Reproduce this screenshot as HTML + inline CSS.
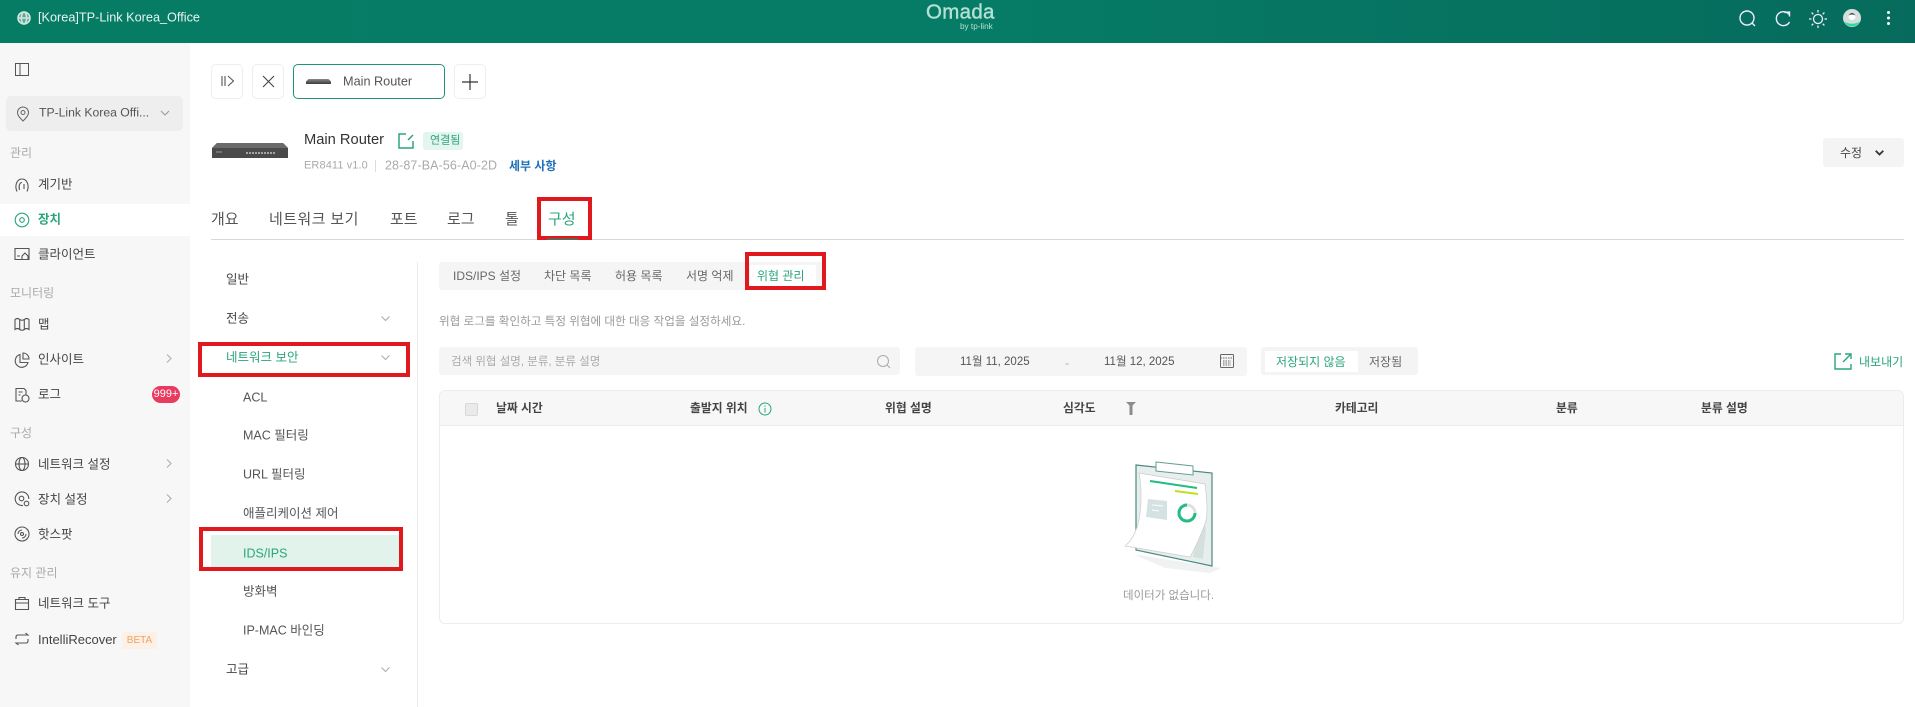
<!DOCTYPE html>
<html lang="ko"><head><meta charset="utf-8"><title>Omada</title>
<style>
*{box-sizing:border-box}
html,body{margin:0;padding:0;width:1915px;height:707px;overflow:hidden;background:#fff;font-family:"Liberation Sans","Noto Sans CJK KR",sans-serif;color:#444}
.a{position:absolute}
.t{position:absolute;transform:translateY(calc(-50% + 1px));white-space:nowrap;line-height:1.2;font-size:12px;color:#4a4a4a}
.s{font-size:12.5px;left:38px;color:#444}
.g{font-size:12px;left:10px;color:#aaa}
.m{font-size:12.5px;left:226px;color:#444}
.n{font-size:12.5px;left:243px;color:#555}
.tb{font-size:15px;top:219px;color:#555}
.st{font-size:12px;top:275px;color:#666}
.h{font-size:11.8px;top:407px;font-weight:bold;color:#444}
.green{color:#2aa57c!important}
.box{position:absolute;border:4px solid #e0191f}
.btn{position:absolute;top:64px;width:32px;height:35px;border:1px solid #eee;border-radius:5px;background:#fff}
svg{position:absolute;overflow:visible;fill:none}
</style></head><body>
<!-- header -->
<div class="a" style="left:0;top:0;width:1915px;height:43px;background:linear-gradient(90deg,#077c65,#067c66 50%,#066b5c)"></div>
<svg style="left:17px;top:11px" width="14" height="14" viewBox="0 0 14 14" stroke="#cfe6df" stroke-width="1.6"><circle cx="7" cy="7" r="6" fill="#5fa795"/><ellipse cx="7" cy="7" rx="2.6" ry="6"/><path d="M1 7h12"/></svg>
<div class="t" style="left:38px;top:17px;font-size:12.7px;color:#e8f4f0">[Korea]TP-Link Korea_Office</div>
<div class="t" style="left:926px;top:12px;font-size:20.5px;color:#b6e0d4;letter-spacing:.3px;-webkit-text-stroke:.4px #b6e0d4">Omada</div>
<div class="t" style="left:960px;top:26px;font-size:8.2px;color:#b6e0d4">by tp-link</div>
<svg style="left:1738px;top:9px" width="20" height="20" viewBox="0 0 20 20" stroke="#eef" stroke-width="1.4"><circle cx="9" cy="9" r="7"/><path d="M14 14l3 3"/></svg>
<svg style="left:1773px;top:9px" width="20" height="20" viewBox="0 0 20 20" stroke="#eef" stroke-width="1.4"><path d="M16 5.5A7 7 0 1 0 16.5 13"/><path d="M11.5 3.5L16.5 3v4.5"/></svg>
<svg style="left:1808px;top:9px" width="20" height="20" viewBox="0 0 20 20" stroke="#eef" stroke-width="1.3"><circle cx="10" cy="10" r="4.5"/><path d="M10 1v2.5M10 16.5V19M1 10h2.5M16.5 10H19M3.6 3.6l1.7 1.7M14.7 14.7l1.7 1.7M3.6 16.4l1.7-1.7M14.7 5.300l1.7-1.7"/></svg>
<svg style="left:1843px;top:9px" width="18" height="18" viewBox="0 0 18 18"><circle cx="9" cy="9" r="9" fill="#d5dfdd"/><path d="M1 12.500Q9 17 17 12.500A9 9 0 0 1 1 12.500Z" fill="#2ddc96"/><circle cx="9" cy="7.500" r="3.500" fill="#fff"/><path d="M5.500 6.500Q9 1.500 12.500 6.500Q9 4.500 5.500 6.500Z" fill="#35494a"/></svg>
<div class="a" style="left:1886.500px;top:11px;width:3px;height:3px;background:#fff;border-radius:2px;box-shadow:0 5.500px #fff,0 11px #fff"></div>
<!-- sidebar -->
<div class="a" style="left:0;top:43px;width:190px;height:664px;background:#f7f7f7"></div>
<svg style="left:15px;top:63px" width="14" height="13" viewBox="0 0 14 13" stroke="#555" stroke-width="1"><rect x=".5" y=".5" width="13" height="12"/><path d="M5 .5v12"/></svg>
<div class="a" style="left:6px;top:96px;width:177px;height:35px;background:#eee;border-radius:5px"></div>
<svg style="left:16px;top:106px" width="14" height="16" viewBox="0 0 14 16" stroke="#666" stroke-width="1"><path d="M7 15C3 11 1.500 9 1.500 6.500a5.500 5.500 0 0 1 11 0C12.500 9 11 11 7 15Z"/><circle cx="7" cy="6.500" r="2"/></svg>
<div class="t" style="left:39px;top:112px;font-size:12.2px;color:#555">TP-Link Korea Offi...</div>
<svg style="left:160px;top:110px" width="10" height="6" viewBox="0 0 10 6" stroke="#999"><path d="M1 1l4 4 4-4"/></svg>
<div class="t g" style="top:152px">관리</div>
<svg style="left:14px;top:178px" width="16" height="14" viewBox="0 0 16 14" stroke="#555" stroke-width="1.100"><path d="M3 13.500C.5 8 2.500 1 8 1s7.500 7 5 12.500M5.500 12C4.500 8 5.500 4.500 8 4.500M10 6v5"/></svg>
<div class="t s" style="top:184px">계기반</div>
<div class="a" style="left:0;top:204px;width:190px;height:32px;background:#fff"></div>
<svg style="left:14px;top:212px" width="16" height="16" viewBox="0 0 16 16" stroke="#2aa57c" stroke-width="1.100"><circle cx="8" cy="8" r="6.800"/><circle cx="8" cy="8" r="2.300"/></svg>
<div class="t s green" style="top:219px;font-weight:bold">장치</div>
<svg style="left:14px;top:247px" width="16" height="14" viewBox="0 0 16 14" stroke="#555" stroke-width="1.100"><path d="M1 1.500h14v11H1zM8 9l3-3 3 3v3.500H8zM3 9h3"/></svg>
<div class="t s" style="top:254px">클라이언트</div>
<div class="t g" style="top:292px">모니터링</div>
<svg style="left:14px;top:317px" width="16" height="14" viewBox="0 0 16 14" stroke="#555" stroke-width="1.100"><path d="M1 2.500q2.500-2 4.700 0v10q-2.200-2-4.700 0zM5.700 2.500q2.300 1.500 4.600 0v10q-2.300 1.500-4.600 0zM10.300 2.500q2.300-2 4.700 0v10q-2.400-2-4.700 0z"/></svg>
<div class="t s" style="top:324px">맵</div>
<svg style="left:14px;top:352px" width="16" height="16" viewBox="0 0 16 16" stroke="#555" stroke-width="1.100"><path d="M6 2.500a6.500 6.500 0 1 0 8 8H6zM9 1a6 6 0 0 1 6 6H9z"/></svg>
<div class="t s" style="top:359px">인사이트</div>
<svg style="left:166px;top:354px" width="6" height="9" viewBox="0 0 6 9" stroke="#aaa"><path d="M1 .5l4 4-4 4"/></svg>
<svg style="left:14px;top:387px" width="16" height="16" viewBox="0 0 16 16" stroke="#555" stroke-width="1.100"><path d="M8 14H2V1.500h8l2 2V8M4.500 5h4M4.500 8h2"/><circle cx="11.500" cy="11.500" r="3.500"/></svg>
<div class="t s" style="top:394px">로그</div>
<div class="a" style="left:152px;top:386px;width:28px;height:17px;background:#e93a5f;border-radius:9px;color:#fff;font-size:11px;line-height:17px;text-align:center">999+</div>
<div class="t g" style="top:432px">구성</div>
<svg style="left:14px;top:456px" width="16" height="16" viewBox="0 0 16 16" stroke="#555" stroke-width="1.100"><circle cx="8" cy="8" r="6.500"/><ellipse cx="8" cy="8" rx="3" ry="6.500"/><path d="M1.500 8h13"/></svg>
<div class="t s" style="top:464px">네트워크 설정</div>
<svg style="left:166px;top:459px" width="6" height="9" viewBox="0 0 6 9" stroke="#aaa"><path d="M1 .5l4 4-4 4"/></svg>
<svg style="left:14px;top:491px" width="16" height="16" viewBox="0 0 16 16" stroke="#555" stroke-width="1.100"><path d="M9 14.500A6.800 6.800 0 1 1 14.800 8"/><circle cx="7.500" cy="7.500" r="2.300"/><circle cx="12.500" cy="12.500" r="2.300"/></svg>
<div class="t s" style="top:499px">장치 설정</div>
<svg style="left:166px;top:494px" width="6" height="9" viewBox="0 0 6 9" stroke="#aaa"><path d="M1 .5l4 4-4 4"/></svg>
<svg style="left:14px;top:526px" width="16" height="16" viewBox="0 0 16 16" stroke="#555" stroke-width="1.100"><circle cx="8" cy="8" r="7"/><circle cx="8" cy="8" r="1.500"/><path d="M4 8a4 4 0 0 1 4-4M12 8a4 4 0 0 1-4 4"/></svg>
<div class="t s" style="top:534px">핫스팟</div>
<div class="t g" style="top:572px">유지 관리</div>
<svg style="left:14px;top:596px" width="16" height="15" viewBox="0 0 16 15" stroke="#555" stroke-width="1.100"><path d="M1.500 3.500h13v10h-13zM5 3.500V1.500h6v2M1.500 7h13"/></svg>
<div class="t s" style="top:603px">네트워크 도구</div>
<svg style="left:14px;top:632px" width="16" height="14" viewBox="0 0 16 14" stroke="#555" stroke-width="1.100"><path d="M2 7V5q0-2 2-2h10l-2.500-2M14 7v2q0 2-2 2H2l2.500 2"/></svg>
<div class="t s" style="top:639px;font-size:13px">IntelliRecover</div>
<div class="a" style="left:122px;top:632px;width:35px;height:17px;background:#fdf1e7;border-radius:2px;color:#f0a060;font-size:10px;line-height:18px;text-align:center">BETA</div>
<!-- device tabs row -->
<div class="btn" style="left:211px"></div>
<svg style="left:221px;top:75px" width="14" height="12" viewBox="0 0 14 12" stroke="#555" stroke-width="1.100"><path d="M1 1v10M4 1v10M7 1l5.500 5L7 11"/></svg>
<div class="btn" style="left:252px"></div>
<svg style="left:262px;top:75px" width="13" height="13" viewBox="0 0 13 13" stroke="#444" stroke-width="1.100"><path d="M1 1l11 11M12 1L1 12"/></svg>
<div class="a" style="left:293px;top:64px;width:152px;height:35px;border:1px solid #20937a;border-radius:5px"></div>
<div class="a" style="left:306px;top:79px;width:25px;height:5px;background:linear-gradient(#8a8a8a,#3a3a3a);clip-path:polygon(10% 0,90% 0,100% 50%,100% 100%,0 100%,0 50%)"></div>
<div class="t" style="left:343px;top:81px;font-size:12.7px;color:#555">Main Router</div>
<div class="btn" style="left:454px"></div>
<svg style="left:462px;top:74px" width="16" height="16" viewBox="0 0 16 16" stroke="#333" stroke-width="1.200"><path d="M8 0v16M0 8h16"/></svg>
<!-- device info -->
<svg style="left:212px;top:143px" width="76" height="15" viewBox="0 0 76 15"><path d="M5 0H71L76 5V15H0V5Z" fill="#4a4a4a"/><path d="M5 0H71L76 5H0Z" fill="#6a6a6a"/><path d="M34 10h30" stroke="#a5a5a5" stroke-width="2" stroke-dasharray="2 1"/><path d="M4 9h6" stroke="#999"/></svg>
<div class="t" style="left:304px;top:140px;font-size:14.7px;color:#333">Main Router</div>
<svg style="left:398px;top:133px" width="16" height="16" viewBox="0 0 16 16" stroke="#2aa57c" stroke-width="1.500"><path d="M8 1H1v14h14V8M10 7l5-5"/></svg>
<div class="a" style="left:423px;top:132px;width:40px;height:18px;background:#e4f4ee;border-radius:3px"></div>
<div class="t green" style="left:430px;top:140px;font-size:11px">연결됨</div>
<div class="t" style="left:304px;top:165px;font-size:11px;letter-spacing:.1px;color:#aaa">ER8411 v1.0</div>
<div class="a" style="left:375px;top:160px;width:1px;height:12px;background:#dcdcdc"></div>
<div class="t" style="left:385px;top:165px;font-size:12.500px;color:#aaa;letter-spacing:.1px">28-87-BA-56-A0-2D</div>
<div class="t" style="left:509px;top:165px;font-size:12px;color:#1e6fb8;font-weight:bold">세부 사항</div>
<div class="a" style="left:1823px;top:138px;width:81px;height:29px;background:#f4f4f4;border-radius:3px"></div>
<div class="t" style="left:1840px;top:152px;font-size:12px;color:#444">수정</div>
<svg style="left:1875px;top:150px" width="9" height="6" viewBox="0 0 9 6" stroke="#333" stroke-width="1.800"><path d="M.7.7l3.800 3.800L8.300.7"/></svg>
<!-- main tabs -->
<div class="t tb" style="left:211px">개요</div>
<div class="t tb" style="left:269px;letter-spacing:.4px">네트워크 보기</div>
<div class="t tb" style="left:390px">포트</div>
<div class="t tb" style="left:447px">로그</div>
<div class="t tb" style="left:505px">톨</div>
<div class="t tb green" style="left:548px">구성</div>
<div class="a" style="left:211px;top:239px;width:1693px;height:1px;background:#d8d8d8"></div>
<div class="box" style="left:537px;top:197px;width:55px;height:43px"></div>
<div class="a" style="left:547px;top:238px;width:31px;height:2px;background:#6b6050"></div>
<!-- left submenu -->
<div class="a" style="left:417px;top:262px;width:1px;height:445px;background:#ececec"></div>
<div class="t m" style="top:279px">일반</div>
<div class="t m" style="top:318px">전송</div>
<svg style="left:381px;top:316px" width="9" height="6" viewBox="0 0 9 6" stroke="#aaa"><path d="M.5.500l4 4 4-4"/></svg>
<div class="t m green" style="top:357px">네트워크 보안</div>
<svg style="left:381px;top:355px" width="9" height="6" viewBox="0 0 9 6" stroke="#aaa"><path d="M.5.500l4 4 4-4"/></svg>
<div class="box" style="left:198px;top:342px;width:212px;height:35px"></div>
<div class="t n" style="top:397px">ACL</div>
<div class="t n" style="top:435px">MAC 필터링</div>
<div class="t n" style="top:474px">URL 필터링</div>
<div class="t n" style="top:513px">애플리케이션 제어</div>
<div class="a" style="left:211px;top:535px;width:189px;height:33px;background:#e2f3ec"></div>
<div class="t n green" style="top:553px">IDS/IPS</div>
<div class="box" style="left:199px;top:527px;width:204px;height:44px"></div>
<div class="t n" style="top:591px">방화벽</div>
<div class="t n" style="top:630px">IP-MAC 바인딩</div>
<div class="t m" style="top:669px">고급</div>
<svg style="left:381px;top:667px" width="9" height="6" viewBox="0 0 9 6" stroke="#aaa"><path d="M.5.500l4 4 4-4"/></svg>
<!-- sub tabs -->
<div class="a" style="left:439px;top:262px;width:385px;height:28px;background:#f5f5f5;border-radius:3px"></div>
<div class="a" style="left:750px;top:265px;width:66px;height:22px;background:#fff"></div>
<div class="t st" style="left:453px">IDS/IPS 설정</div>
<div class="t st" style="left:544px">차단 목록</div>
<div class="t st" style="left:615px">허용 목록</div>
<div class="t st" style="left:686px">서명 억제</div>
<div class="t st green" style="left:757px">위협 관리</div>
<div class="box" style="left:745px;top:252px;width:81px;height:38px"></div>
<div class="t" style="left:439px;top:321px;font-size:11.600px;color:#999">위협 로그를 확인하고 특정 위협에 대한 대응 작업을 설정하세요.</div>
<!-- filters -->
<div class="a" style="left:439px;top:347px;width:461px;height:28px;background:#f5f5f5;border-radius:3px"></div>
<div class="t" style="left:451px;top:362px;font-size:11.500px;color:#aaa">검색 위협 설명, 분류, 분류 설명</div>
<svg style="left:877px;top:355px" width="14" height="14" viewBox="0 0 14 14" stroke="#aaa"><circle cx="6" cy="6" r="5.500"/><path d="M10 10l3 3"/></svg>
<div class="a" style="left:915px;top:347px;width:332px;height:29px;background:#f5f5f5;border-radius:3px"></div>
<div class="t" style="left:960px;top:362px;font-size:11.500px;color:#555">11월 11, 2025</div>
<div class="t" style="left:1065px;top:362px;font-size:12px;color:#aaa">-</div>
<div class="t" style="left:1104px;top:362px;font-size:11.500px;color:#555">11월 12, 2025</div>
<svg style="left:1220px;top:354px" width="14" height="14" viewBox="0 0 14 14" stroke="#666"><rect x=".5" y=".5" width="13" height="13" rx="1"/><path d="M.5 4h13M3 7h8M3 9h8M3 11h8" stroke-dasharray="1.500 1"/></svg>
<div class="a" style="left:1261px;top:347px;width:157px;height:28px;background:#f4f4f4;border-radius:3px"></div>
<div class="a" style="left:1265px;top:351px;width:93px;height:21px;background:#fff"></div>
<div class="t green" style="left:1276px;top:361px;font-size:12px">저장되지 않음</div>
<div class="t" style="left:1369px;top:361px;font-size:12px;color:#666">저장됨</div>
<svg style="left:1834px;top:353px" width="18" height="17" viewBox="0 0 18 17" stroke="#2aa57c" stroke-width="1.400"><path d="M7 1H1v15h16v-5M9 9l8-8M11 1h6v5"/></svg>
<div class="t green" style="left:1859px;top:361px;font-size:12px">내보내기</div>
<!-- table -->
<div class="a" style="left:439px;top:390px;width:1465px;height:234px;border:1px solid #ececec;border-radius:6px;overflow:hidden"><div style="height:35px;background:#f7f7f7;border-bottom:1px solid #ececec"></div></div>
<div class="a" style="left:465px;top:403px;width:13px;height:13px;background:#eaeaea;border:1px solid #d8d8d8;border-radius:2px"></div>
<div class="t h" style="left:496px">날짜 시간</div>
<div class="t h" style="left:690px">출발지 위치</div>
<svg style="left:758px;top:402px" width="14" height="14" viewBox="0 0 14 14" stroke="#2aa57c"><circle cx="7" cy="7" r="6"/><path d="M7 6v4.500M7 3.500v1.300"/></svg>
<div class="t h" style="left:885px">위협 설명</div>
<div class="t h" style="left:1063px">심각도</div>
<svg style="left:1126px;top:402px" width="10" height="13" viewBox="0 0 10 13"><path d="M0 0h10L6.500 3.500V13h-3V3.500z" fill="#8c8c8c"/></svg>
<div class="t h" style="left:1335px">카테고리</div>
<div class="t h" style="left:1556px">분류</div>
<div class="t h" style="left:1701px">분류 설명</div>
<!-- empty illustration -->
<svg style="left:1125px;top:460px" width="100" height="115" viewBox="0 0 100 115">
<path d="M8 94L96 108 85 113 40 108z" fill="#f0f2f1"/>
<path d="M11 5l76 8v93L11 90z" fill="#e6efed" stroke="#4d8a80" stroke-width="1.200"/>
<path d="M31 2l37 4v9l-37-4z" fill="#fff" stroke="#6a9c93"/>
<path d="M75 65Q83 60 80 78L78 99 68 97z" fill="#d5e0dd"/>
<path d="M14 13l66 11q4 30 0 40Q72 85 65 97L0 86Q10 78 14 60Q18 35 14 13z" fill="#fff" stroke="#cfcfcf" stroke-width=".8"/>
<path d="M25 21l47 7" stroke="#21bd82" stroke-width="2"/>
<path d="M50 31l23 3" stroke="#bfe021" stroke-width="2"/>
<path d="M23 39l19 2v19l-21-3z" fill="#d5e2e3"/>
<path d="M27 45l11 1M27 50l7 1" stroke="#fff"/>
<circle cx="62" cy="53" r="8" stroke="#e0e0e0" stroke-width="3"/>
<path d="M62 45a8 8 0 1 0 8 8" stroke="#21bd82" stroke-width="3"/>
</svg>
<div class="t" style="left:1123px;top:596px;font-size:11.500px;color:#999">데이터가 없습니다.</div>
</body></html>
